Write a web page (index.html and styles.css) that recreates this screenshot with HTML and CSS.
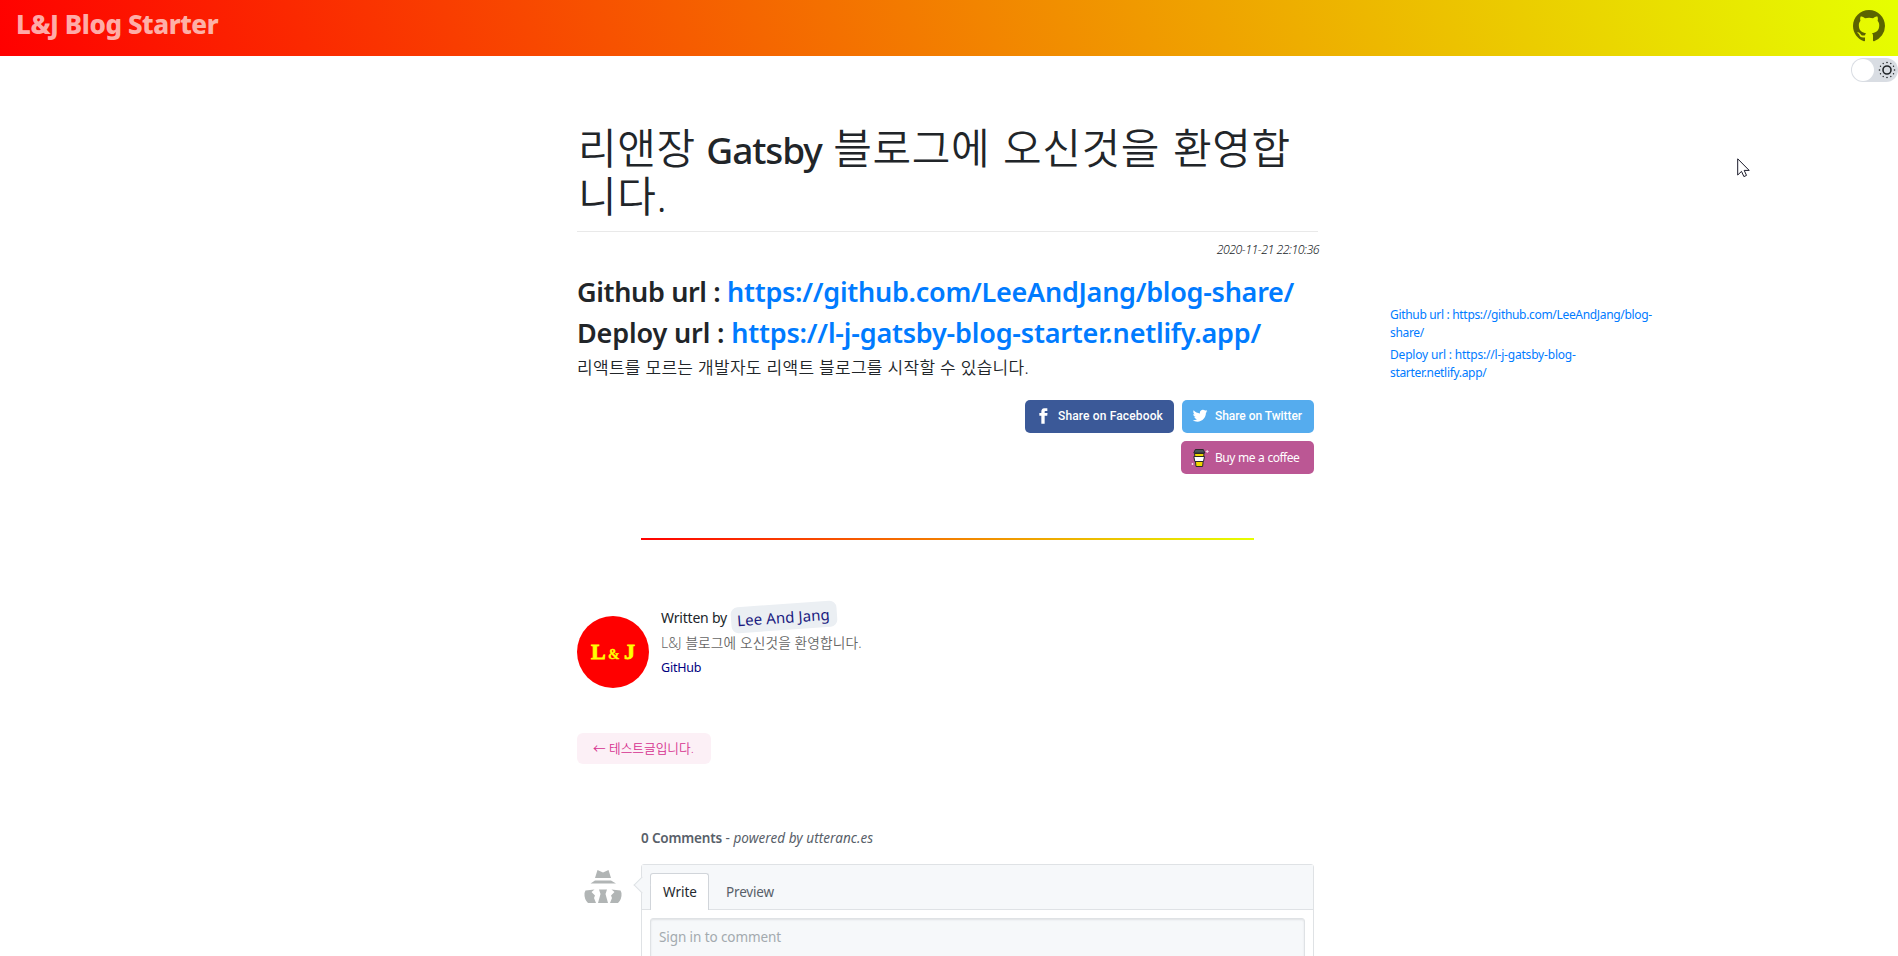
FILE: index.html
```
<!DOCTYPE html>
<html lang="ko">
<head>
<meta charset="utf-8">
<title>L&amp;J Blog Starter</title>
<link rel="stylesheet" href="styles.css">
</head>
<body>
<header class="topbar">
  <a class="brand">L&amp;J Blog Starter</a>
  <svg class="github" viewBox="0 0 16 16"><path d="M8 0C3.58 0 0 3.58 0 8c0 3.54 2.29 6.53 5.47 7.59.4.07.55-.17.55-.38 0-.19-.01-.82-.01-1.49-2.01.37-2.53-.49-2.69-.94-.09-.23-.48-.94-.82-1.13-.28-.15-.68-.52-.01-.53.63-.01 1.08.58 1.23.82.72 1.21 1.87.87 2.33.66.07-.52.28-.87.51-1.07-1.78-.2-3.64-.89-3.64-3.95 0-.87.31-1.59.82-2.15-.08-.2-.36-1.02.08-2.12 0 0 .67-.21 2.2.82.64-.18 1.32-.27 2-.27s1.36.09 2 .27c1.53-1.04 2.2-.82 2.2-.82.44 1.1.16 1.92.08 2.12.51.56.82 1.27.82 2.15 0 3.07-1.87 3.75-3.65 3.95.29.25.54.73.54 1.48 0 1.07-.01 1.93-.01 2.2 0 .21.15.46.55.38A8.01 8.01 0 0 0 16 8c0-4.42-3.58-8-8-8z"/></svg>
</header>
<div class="switch-row">
  <div class="switch"><span class="knob"></span>
    <svg class="sun" viewBox="0 0 18 18"><circle cx="9" cy="9" r="4"/><g class="rays"><circle cx="9" cy="1.5" r=".8"/><circle cx="9" cy="16.5" r=".8"/><circle cx="1.5" cy="9" r=".8"/><circle cx="16.5" cy="9" r=".8"/><circle cx="5.2" cy="2.5" r=".7"/><circle cx="12.8" cy="2.5" r=".7"/><circle cx="5.2" cy="15.5" r=".7"/><circle cx="12.8" cy="15.5" r=".7"/><circle cx="2.5" cy="5.2" r=".7"/><circle cx="15.5" cy="5.2" r=".7"/><circle cx="2.5" cy="12.8" r=".7"/><circle cx="15.5" cy="12.8" r=".7"/></g></svg>
  </div>
</div>
<svg class="cursor" viewBox="0 0 13 20"><path d="M.7 .8V17l3.8-3.6 2.4 5.2 2.6-1.2-2.3-5H12.2z"/></svg>
<div class="layout">
  <main class="post">
    <h1 class="title"><span class="ko">리앤장</span> <span class="latin">Gatsby</span> <span class="ko">블로그에 오신것을 환영합</span><br><span class="ko">니다.</span></h1>
    <p class="date">2020-11-21 22:10:36</p>
    <h3 class="url">Github url : <a>https://github.com/LeeAndJang/blog-share/</a></h3>
    <h3 class="url deploy">Deploy url : <a>https://l-j-gatsby-blog-starter.netlify.app/</a></h3>
    <p class="lead">리액트를 모르는 개발자도 리액트 블로그를 시작할 수 있습니다.</p>
    <div class="share">
      <div class="share-line">
        <a class="btn facebook"><svg viewBox="0 0 24 24"><path d="M18.77 7.46H14.5v-1.9c0-.9.6-1.1 1-1.1h3V.5h-4.33C10.24.5 9.5 3.44 9.5 5.32v2.15h-3v4h3v12h5v-12h3.85l.42-4z"/></svg>Share on Facebook</a>
        <a class="btn twitter"><svg viewBox="0 0 24 24"><path d="M23.44 4.83c-.8.37-1.5.38-2.22.02.93-.56.98-.96 1.32-2.02-.88.52-1.86.9-2.9 1.1-.82-.88-2-1.43-3.3-1.43-2.5 0-4.55 2.04-4.55 4.54 0 .36.03.7.1 1.04-3.77-.2-7.12-2-9.36-4.75-.4.67-.6 1.45-.6 2.3 0 1.56.8 2.95 2 3.77-.74-.03-1.44-.23-2.05-.57v.06c0 2.2 1.56 4.03 3.64 4.44-.67.2-1.37.2-2.06.08.58 1.8 2.26 3.12 4.25 3.16C5.78 18.1 3.37 18.74 1 18.46c2 1.3 4.4 2.04 6.97 2.04 8.35 0 12.92-6.92 12.92-12.93 0-.2 0-.4-.02-.6.9-.63 1.96-1.22 2.56-2.14z"/></svg>Share on Twitter</a>
      </div>
      <a class="btn coffee"><svg class="cup" viewBox="0 0 20 20"><path class="cup-body" d="M5.500 5.500h9.500l-1.400 13H7z"/><path d="M4.800 8.500h10.700l-1 5H5.800z"/><path class="lid" d="M6.300 1.500h8l1.500 3.500H4.800z"/><path class="spark" d="M18.200 2v3M16.700 3.500h3M3.500 15v2M2.500 16h2"/></svg>Buy me a coffee</a>
    </div>
    <div class="rule"></div>
    <section class="bio">
      <div class="avatar"><svg viewBox="0 0 72 72"><text x="14" y="43" class="av-l">L</text><text x="31" y="43" class="av-a">&amp;</text><text x="47" y="43" class="av-l">J</text></svg></div>
      <div class="bio-text">
        <p class="by"><span class="by-label">Written by</span><a class="name">Lee And Jang</a></p>
        <p class="about">L&amp;J 블로그에 오신것을 환영합니다.</p>
        <p class="gh">GitHub</p>
      </div>
    </section>
    <a class="prev">← 테스트글입니다.</a>
    <section class="comments">
      <p class="count"><b>0 Comments</b> - <i>powered by utteranc.es</i></p>
      <div class="thread">
        <svg class="anon" viewBox="0 0 38 34"><path d="M13.500 0l5.500 2.500L24.500 0 27 8H11zM6.500 13.500L11 10.500h16l5 3zM1.500 20.500L10.500 19.500 7.500 22 11 25.500 10 28 12 33H4Q0 29 .5 23zM36.500 20.500L27.500 19.500 30.500 22 27 25.500 28 28 26 33h8Q38 29 37.500 23zM15 19.500h8L21.500 24 24 33H14L16.500 24z"/></svg>
        <div class="box">
          <div class="tabs"><span class="tab on">Write</span><span class="tab">Preview</span></div>
          <div class="area">Sign in to comment</div>
        </div>
      </div>
    </section>
  </main>
  <aside class="toc">
    <a>Github url : https://github.com/LeeAndJang/blog-<br>share/</a>
    <a><span class="wide">Deploy url : https://l-j-gatsby-blog-</span><br>starter.netlify.app/</a>
  </aside>
</div>
</body>
</html>
```
FILE: styles.css
```
* { box-sizing: border-box; }
body { margin: 0; height: 956px; overflow: hidden; background: #fff; color: #212529; font-family: "Noto Sans", "Noto Sans CJK KR", sans-serif; position: relative; }
h1, h3, p { margin: 0; white-space: nowrap; }
.topbar { height: 56px; padding: 0 13px 0 16px; display: flex; justify-content: space-between; background: linear-gradient(70deg, #ff0000, #e6ff00); }
.brand { margin-top: 6px; line-height: 36px; font-size: 26px; font-weight: 800; letter-spacing: -.42px; color: rgba(255,255,255,.68); }
.github { width: 32px; height: 32px; margin-top: 10px; opacity: .6; }
.switch-row { display: flex; justify-content: flex-end; height: 70px; padding-top: 2px; }
.switch { width: 47px; height: 24px; border-radius: 12px; background: #d9dde3; padding: 1px; display: flex; align-items: center; justify-content: space-between; }
.knob { width: 22px; height: 22px; border-radius: 50%; background: #fff; }
.sun { width: 18px; height: 18px; margin-right: 1px; fill: none; stroke: #212529; stroke-width: 1.6; }
.rays { fill: #212529; stroke: none; }
.cursor { position: absolute; left: 1737px; top: 158px; width: 13px; height: 20px; fill: #fff; stroke: #1a1a2a; stroke-width: 1; }
.layout { display: flex; padding-left: 577px; gap: 72px; }
.post { width: 741px; }
.title { height: 106px; padding-left: 1px; border-bottom: 1px solid #e9e9e9; font-size: 37px; line-height: 48px; font-weight: 500; }
.title .ko { font-size: 42px; line-height: 40px; font-weight: 350; letter-spacing: .6px; word-spacing: 1.3px; }
.title .latin { letter-spacing: -1.1px; margin: 0 2px 0 1px; }
.date { margin-top: 8px; margin-right: -1px; height: 35px; line-height: 20px; font-size: 12.3px; font-weight: 350; font-style: italic; letter-spacing: -.48px; text-align: right; }
.url { height: 40.5px; line-height: 34px; font-size: 27px; font-weight: 600; letter-spacing: -.35px; }
.url a { letter-spacing: -.27px; }
.deploy { letter-spacing: -.15px; }
.deploy a { letter-spacing: -.2px; }
.url a, .toc a { color: #007bff; }
.lead { height: 44px; line-height: 24px; font-size: 17px; font-weight: 350; letter-spacing: .3px; }
.share { padding-right: 4px; display: flex; flex-direction: column; align-items: flex-end; gap: 8px; }
.share-line { display: flex; gap: 8px; }
.btn { height: 33px; border-radius: 5px; display: flex; align-items: center; white-space: nowrap; color: #fff; font: 500 12px/20px Roboto, sans-serif; padding-bottom: 2px; }
.btn svg { width: 16px; height: 16px; fill: #fff; }
.facebook { width: 149px; background: #3b5998; padding-left: 10px; gap: 7px; letter-spacing: .14px; }
.twitter { width: 132px; background: #55acee; padding-left: 10px; gap: 7px; letter-spacing: -.05px; }
.coffee { width: 133px; background: #bb5794; padding: 0 0 0 8px; gap: 6px; font: 400 12px/20px "Noto Sans", sans-serif; letter-spacing: -.5px; word-spacing: .5px; }
.btn .cup { width: 20px; height: 20px; stroke: #2b2b2b; stroke-width: 1; }
.cup .cup-body { fill: #f0d800; }
.cup .lid { fill: #4a5558; }
.cup .spark { stroke: #f3d9e8; fill: none; }
.rule { height: 2px; width: 613px; margin: 64px 0 0 64px; background: linear-gradient(90deg, #ff0000, #e6ff00); }
.bio { display: flex; gap: 12px; margin-top: 63px; height: 130px; }
.avatar { width: 72px; height: 72px; margin-top: 13px; border-radius: 50%; background: #f00; fill: #ff0; font-family: "Liberation Serif", serif; font-weight: 700; }
.av-l { font-size: 22px; stroke: #ff0; stroke-width: .8; }
.av-a { font-size: 14px; stroke: #ff0; stroke-width: .3; }
.by { display: flex; align-items: center; height: 28px; font-size: 14px; line-height: 24px; gap: 4px; letter-spacing: -.2px; }
.by-label { padding-top: 2px; }
.name { width: 106px; height: 26px; margin-top: -1px; padding-left: 6px; border-radius: 7px; background: #ebeff3; color: #1a1a80; font-size: 15px; line-height: 26px; letter-spacing: .1px; transform: rotate(-4deg); }
.about { height: 25px; line-height: 24px; font-size: 13.7px; font-weight: 350; letter-spacing: .13px; color: #666; }
.gh { line-height: 24px; font-size: 12.5px; color: #000080; letter-spacing: -.2px; }
.prev { display: flex; align-items: center; width: 134px; height: 31px; padding: 0 0 2px 16px; border-radius: 6px; background: #fcf0f6; color: #d6308f; font-size: 12.7px; font-weight: 350; }
.comments { margin-top: 64px; }
.count { padding-left: 64px; height: 36px; line-height: 21px; font-size: 13.5px; color: #586069; }
.count b { font-weight: 600; letter-spacing: -.17px; }
.count i { letter-spacing: .06px; }
.thread { display: flex; gap: 19px; padding-left: 7px; }
.anon { width: 38px; height: 34px; margin-top: 6px; fill: #b1b5b5; }
.box { position: relative; width: 673px; height: 120px; border: 1px solid #dfe2e5; border-radius: 3px; background: #fff; }
.box::before { content: ""; position: absolute; left: -6px; top: 14px; width: 11px; height: 11px; background: #f6f8fa; border-left: 1px solid #dfe2e5; border-bottom: 1px solid #dfe2e5; transform: rotate(45deg); }
.tabs { display: flex; height: 45px; padding: 8px 8px 0; background: #f6f8fa; border-bottom: 1px solid #dfe2e5; font-size: 13.5px; color: #586069; }
.tab { height: 37px; padding: 0 16px; border: 1px solid transparent; line-height: 36px; letter-spacing: -.16px; }
.tab.on { width: 59px; padding: 0 12px; background: #fff; border-color: #d1d5da; border-bottom: 0; border-radius: 3px 3px 0 0; color: #24292e; letter-spacing: 0; }
.area { margin: 8px 8px 0; height: 90px; padding: 8px; line-height: 21px; border: 1px solid #dfe2e5; border-radius: 3px; background: #f6f8fa; box-shadow: inset 0 1px 2px rgba(27,31,35,.1); font-size: 13.5px; letter-spacing: -.09px; color: #a3aaaf; }
.toc { padding-top: 180px; font-size: 12px; line-height: 18px; letter-spacing: -.32px; }
.toc a { display: block; margin-bottom: 4px; white-space: nowrap; }
.toc .wide { letter-spacing: -.19px; }
```
